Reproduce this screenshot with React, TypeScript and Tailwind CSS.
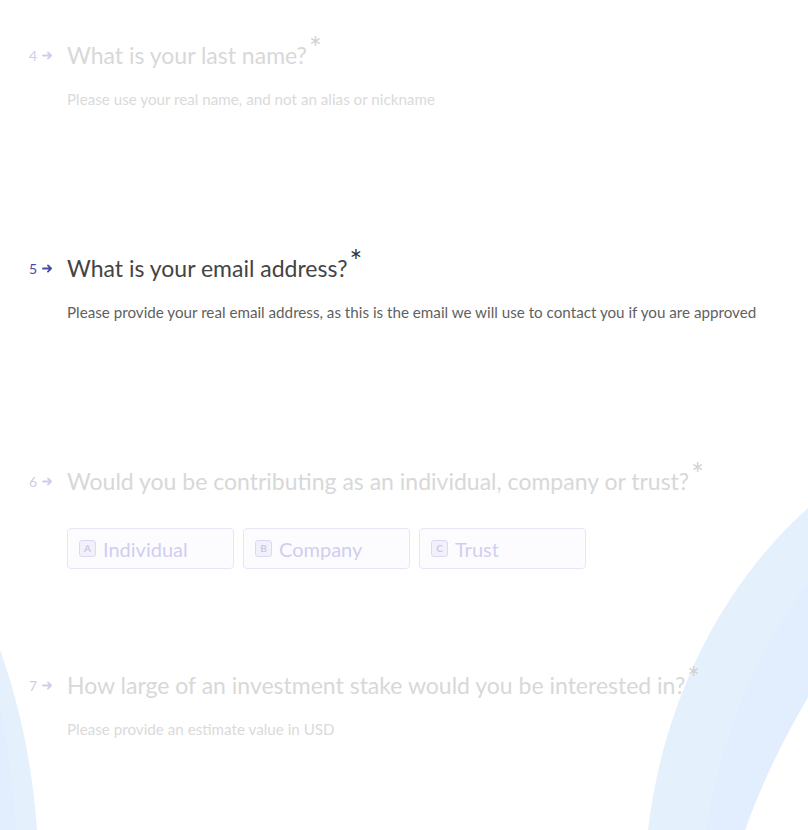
import React from "react";

const Arrow = ({ className }: { className: string }) => (
  <svg viewBox="0 0 12 10" className={className} fill="none">
    <path d="M1 5h9M6.5 1.5 10 5l-3.5 3.5" stroke="currentColor" strokeWidth="2" strokeLinecap="round" strokeLinejoin="round" />
  </svg>
);

const Title = ({
  n,
  text,
  active,
}: {
  n: number;
  text: string;
  active?: boolean;
}) => (
  <div className="flex items-center h-[32px]">
    <div
      className={`w-[67px] flex items-center justify-end pr-[14px] gap-[5px] text-[14px] ${
        active ? "text-[#4a4aa3]" : "text-[#cfcdeb]"
      }`}
    >
      <span>{n}</span>
      <Arrow className="w-[11px] h-[9px] mt-[1px]" />
    </div>
    <h2
      className={`text-[23px] leading-[32px] ${
        active ? "text-[#444]" : "text-[#d8d8d8]"
      }`}
    >
      {text}
      <span
        className={`inline-block align-top ml-[2px] text-[30px] leading-[16px] ${
          active ? "text-[#333]" : "text-[#d2d2d2]"
        }`}
      >
        *
      </span>
    </h2>
  </div>
);

const Desc = ({ text, active }: { text: string; active?: boolean }) => (
  <p
    className={`pl-[67px] mt-[18px] text-[15.2px] leading-[20px] ${
      active ? "text-[#5f5f5f]" : "text-[#dadada]"
    }`}
  >
    {text}
  </p>
);

const Choice = ({ k, label }: { k: string; label: string }) => (
  <div className="w-[167px] h-[41px] rounded-[4px] border border-[#e8e6f6] bg-[#fcfcff] flex items-center pl-[11px] gap-[7px]">
    <span className="w-[17px] h-[17px] rounded-[3px] border border-[#dcdaf2] bg-[#f1f0fb] text-[#cbc9ea] text-[10px] font-bold flex items-center justify-center">
      {k}
    </span>
    <span className="text-[20px] text-[#d0cef0]">{label}</span>
  </div>
);

export default function App() {
  return (
    <div
      className="relative w-[808px] h-[830px] overflow-hidden bg-white"
      style={{ fontFamily: "Lato, 'Noto Sans', sans-serif" }}
    >
      {/* background arcs */}
      <svg className="absolute inset-0 w-full h-full" viewBox="0 0 808 830">
        <path d="M648 830 C662 710 716 590 808 508 L808 697 C784 738 762 782 745 830 Z" fill="#e5f0fd" />
        <path d="M706 830 C722 730 762 640 808 585 L808 697 C784 738 762 782 745 830 Z" fill="#e2eefd" />
        <path d="M0 650 C18 700 32 760 37 830 L0 830 Z" fill="#e5f0fd" />
        <path d="M0 705 C8 745 14 790 16 830 L0 830 Z" fill="#e2eefd" />
      </svg>

      <div className="relative pt-[39px]">
        <section className="h-[213px]">
          <Title n={4} text="What is your last name?" />
          <Desc text="Please use your real name, and not an alias or nickname" />
        </section>
        <section className="h-[213px]">
          <Title n={5} text="What is your email address?" active />
          <Desc
            active
            text="Please provide your real email address, as this is the email we will use to contact you if you are approved"
          />
        </section>
        <section className="h-[204px]">
          <Title n={6} text="Would you be contributing as an individual, company or trust?" />
          <div className="pl-[67px] mt-[31px] flex gap-[9px]">
            <Choice k="A" label="Individual" />
            <Choice k="B" label="Company" />
            <Choice k="C" label="Trust" />
          </div>
        </section>
        <section>
          <Title n={7} text="How large of an investment stake would you be interested in?" />
          <Desc text="Please provide an estimate value in USD" />
        </section>
      </div>
    </div>
  );
}
